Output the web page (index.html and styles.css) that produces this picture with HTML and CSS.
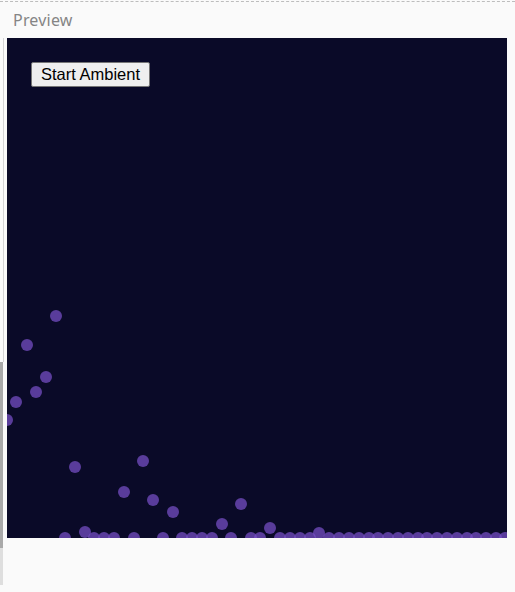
FILE: index.html
```html
<!DOCTYPE html>
<html lang="en">
<head>
    <meta charset="UTF-8">
    <meta name="viewport" content="width=device-width, initial-scale=1.0">
    <title>Preview</title>
    <link rel="stylesheet" href="styles.css">
</head>
<body>
    <div class="panel">
        <div class="panel-header">Preview</div>
        <div class="preview">
            <div class="gutter">
                <div class="edge-line"></div>
                <div class="edge-thumb"></div>
                <div class="edge-track"></div>
            </div>
            <div class="stage">
                <svg class="particles" width="500" height="500" viewBox="0 0 500 500">
                    <g fill="rgba(120, 80, 200, 0.72)">
                        <!-- floating -->
                        <circle cx="49" cy="278" r="6"/>
                        <circle cx="20" cy="307" r="6"/>
                        <circle cx="39" cy="339" r="6"/>
                        <circle cx="29" cy="354" r="6"/>
                        <circle cx="9" cy="364" r="6"/>
                        <circle cx="0" cy="382" r="6"/>
                        <circle cx="68" cy="429" r="6"/>
                        <circle cx="136" cy="423" r="6"/>
                        <circle cx="117" cy="454" r="6"/>
                        <circle cx="146" cy="462" r="6"/>
                        <circle cx="166" cy="474" r="6"/>
                        <circle cx="234" cy="466" r="6"/>
                        <circle cx="215" cy="486" r="6"/>
                        <circle cx="263" cy="490" r="6"/>
                        <circle cx="78" cy="494" r="6"/>
                        <circle cx="312" cy="495" r="6"/>
                        <!-- settled on the floor -->
                        <circle cx="58" cy="500" r="6"/>
                        <circle cx="87" cy="500" r="6"/>
                        <circle cx="97" cy="500" r="6"/>
                        <circle cx="107" cy="500" r="6"/>
                        <circle cx="127" cy="500" r="6"/>
                        <circle cx="156" cy="500" r="6"/>
                        <circle cx="175" cy="500" r="6"/>
                        <circle cx="185" cy="500" r="6"/>
                        <circle cx="195" cy="500" r="6"/>
                        <circle cx="205" cy="500" r="6"/>
                        <circle cx="224" cy="500" r="6"/>
                        <circle cx="244" cy="500" r="6"/>
                        <circle cx="253" cy="500" r="6"/>
                        <circle cx="273" cy="500" r="6"/>
                        <circle cx="283" cy="500" r="6"/>
                        <circle cx="293" cy="500" r="6"/>
                        <circle cx="303" cy="500" r="6"/>
                        <circle cx="322" cy="500" r="6"/>
                        <circle cx="332" cy="500" r="6"/>
                        <circle cx="342" cy="500" r="6"/>
                        <circle cx="352" cy="500" r="6"/>
                        <circle cx="362" cy="500" r="6"/>
                        <circle cx="371" cy="500" r="6"/>
                        <circle cx="381" cy="500" r="6"/>
                        <circle cx="391" cy="500" r="6"/>
                        <circle cx="401" cy="500" r="6"/>
                        <circle cx="411" cy="500" r="6"/>
                        <circle cx="420" cy="500" r="6"/>
                        <circle cx="430" cy="500" r="6"/>
                        <circle cx="440" cy="500" r="6"/>
                        <circle cx="450" cy="500" r="6"/>
                        <circle cx="460" cy="500" r="6"/>
                        <circle cx="469" cy="500" r="6"/>
                        <circle cx="479" cy="500" r="6"/>
                        <circle cx="489" cy="500" r="6"/>
                        <circle cx="498" cy="500" r="6"/>
                    </g>
                </svg>
                <button class="start">Start Ambient</button>
            </div>
        </div>
    </div>
</body>
</html>
```

FILE: styles.css
```css
body {
    margin: 0;
    padding-top: 1px;
    background-color: #fafafa;
    font-family: 'Noto Sans', sans-serif;
}

.panel {
    border-top: 1px dashed #bdbdbd;
    height: 590px;
}

.panel-header {
    height: 36px;
    line-height: 36px;
    padding-left: 13px;
    font-size: 16px;
    letter-spacing: 0.2px;
    color: #858585;
}

.preview {
    display: flex;
}

/* left pane edge */
.gutter {
    width: 7px;
    display: flex;
    flex-direction: column;
}
.edge-line {
    width: 3px;
    height: 324px;
    border-right: 1px solid #d4d4d4;
}
.edge-thumb {
    width: 3px;
    height: 186px;
    background-color: #a9a9a9;
}
.edge-track {
    width: 3px;
    height: 37px;
    background-color: #dedede;
}

.stage {
    position: relative;
    width: 500px;
    height: 500px;
    background-color: #0a0a28;
    overflow: hidden;
}

.particles {
    display: block;
}

.start {
    position: absolute;
    top: 24px;
    left: 24px;
    width: 119px;
    height: 25px;
    padding: 0;
    font-family: 'Liberation Sans', Arial, sans-serif;
    font-size: 16.5px;
    color: #000;
    background-color: #efefef;
    border: 1px solid #767676;
    border-radius: 2px;
}
```
